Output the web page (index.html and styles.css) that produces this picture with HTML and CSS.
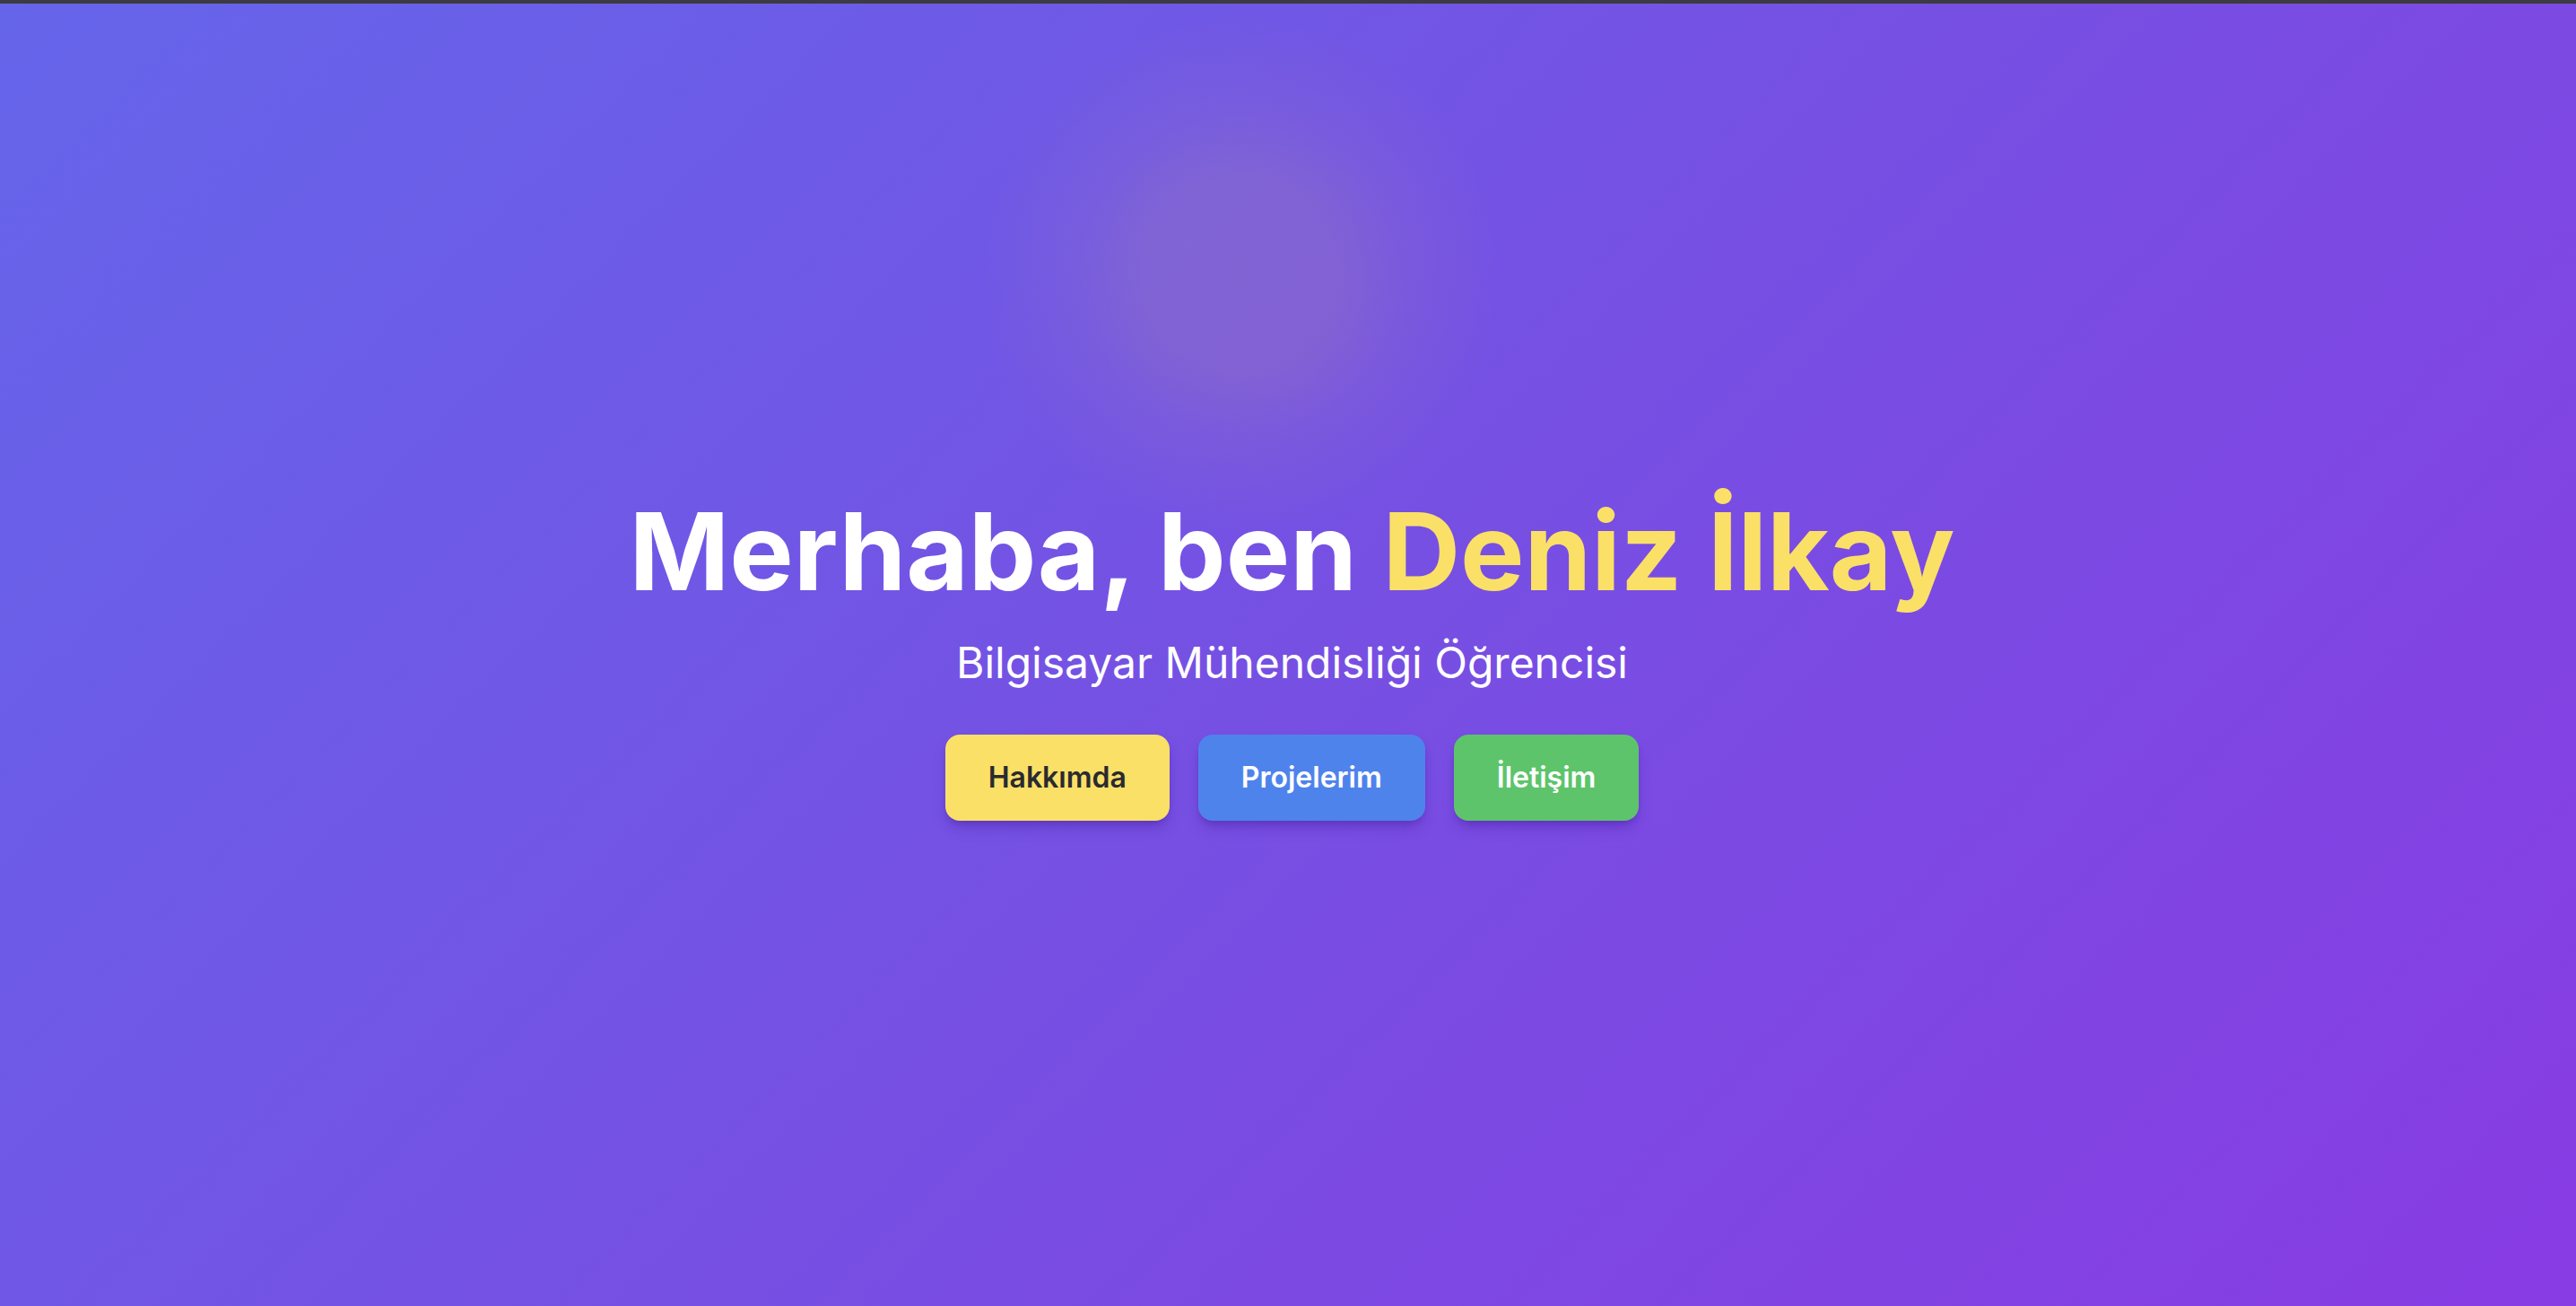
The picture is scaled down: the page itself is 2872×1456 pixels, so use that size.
FILE: index.html
```html
<!DOCTYPE html>
<html lang="tr">
<head>
<meta charset="utf-8">
<title>Deniz İlkay</title>
<link rel="stylesheet" href="styles.css">
</head>
<body>
<main class="hero">
  <div class="glow"></div>
  <div class="content">
    <h1 class="title">Merhaba, ben <span class="name">Deniz İlkay</span></h1>
    <p class="subtitle">Bilgisayar Mühendisliği Öğrencisi</p>
    <div class="actions">
      <a class="btn btn-yellow" href="#hakkimda">Hakkımda</a>
      <a class="btn btn-blue" href="#projeler">Projelerim</a>
      <a class="btn btn-green" href="#iletisim">İletişim</a>
    </div>
  </div>
</main>
</body>
</html>
```
FILE: styles.css
```css
html, body {
  margin: 0;
  padding: 0;
  height: 100%;
}
body {
  font-family: Inter, "Noto Sans", sans-serif;
  overflow: hidden;
}
.hero {
  position: relative;
  box-sizing: border-box;
  min-height: 100vh;
  border-top: 4px solid #3c3b40;
  background: linear-gradient(135deg, #6565ea 0%, #7650e3 50%, #883ce3 100%);
  display: flex;
  align-items: center;
  justify-content: center;
  overflow: hidden;
}
.glow {
  position: absolute;
  left: 1384px;
  top: 303px;
  width: 640px;
  height: 640px;
  margin: -320px 0 0 -320px;
  border-radius: 50%;
  background: radial-gradient(circle, rgba(253, 215, 80, 0.11) 0, rgba(253, 215, 80, 0.105) 110px, rgba(253, 215, 80, 0.05) 180px, rgba(253, 215, 80, 0) 290px);
  pointer-events: none;
}
.content {
  position: relative;
  text-align: center;
  display: flex;
  flex-direction: column;
  align-items: center;
  margin-top: 10px;
  margin-left: 9px;
}
.title {
  margin: 0 0 32px;
  font-size: 120px;
  line-height: 1;
  font-weight: 700;
  color: #ffffff;
  letter-spacing: 0;
}
.name {
  color: #fae067;
}
.subtitle {
  margin: 0 0 48px;
  font-size: 48px;
  line-height: 64px;
  font-weight: 400;
  color: #ffffff;
}
.actions {
  display: flex;
  gap: 32px;
}
.btn {
  display: block;
  padding: 24px 48px;
  font-size: 32px;
  line-height: 48px;
  font-weight: 600;
  border-radius: 16px;
  text-decoration: none;
  box-shadow: 0 10px 16px -4px rgba(60, 20, 140, 0.35), 0 4px 6px -2px rgba(60, 20, 140, 0.2);
}
.btn-yellow {
  background: #fae066;
  color: #2a2a30;
}
.btn-blue {
  background: #4f83ec;
  color: #ffffff;
}
.btn-green {
  background: #5dc46b;
  color: #ffffff;
}
```
